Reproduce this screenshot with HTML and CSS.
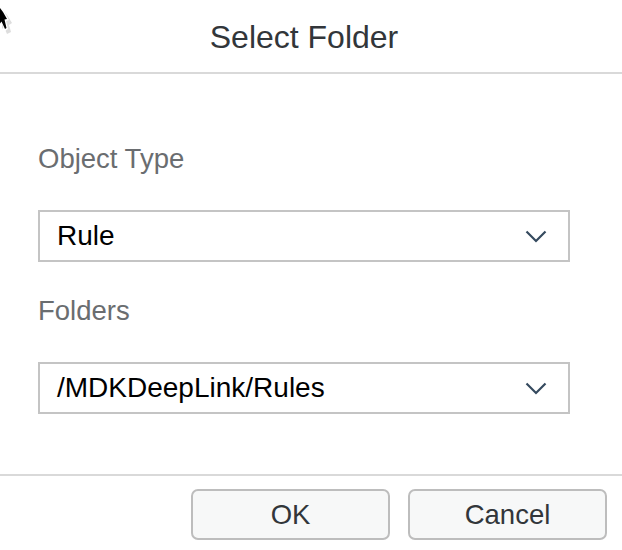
FILE: index.html
```
<!DOCTYPE html>
<html>
<head>
<meta charset="utf-8">
<link rel="stylesheet" href="styles.css">
</head>
<body>
<div class="dialog">
  <header class="header"><h1 class="title">Select Folder</h1></header>
  <main class="content">
    <label class="label">Object Type</label>
    <div class="select">
      <span class="value">Rule</span>
      <svg class="chev" width="22" height="13" viewBox="0 0 22 13"><polyline points="1.5,1.5 11,11 20.5,1.5" fill="none" stroke="#354a5f" stroke-width="2.2"/></svg>
    </div>
    <label class="label second">Folders</label>
    <div class="select">
      <span class="value">/MDKDeepLink/Rules</span>
      <svg class="chev" width="22" height="13" viewBox="0 0 22 13"><polyline points="1.5,1.5 11,11 20.5,1.5" fill="none" stroke="#354a5f" stroke-width="2.2"/></svg>
    </div>
  </main>
  <footer class="footer">
    <button class="btn">OK</button>
    <button class="btn">Cancel</button>
  </footer>
</div>
<svg class="cursor" width="16" height="36" viewBox="0 0 16 36">
  <polygon points="2,9 7,15 12,23 9,25 11,32 7,34 4,27 2,29" fill="#bbb" opacity="0.5"/>
  <polygon points="0,6 4,11 9,20 6,21 8,29 5,31 2,24 0,26" fill="#fff"/>
  <polygon points="0,8 3,12 7,19 4.5,19.5 6.5,28 5,29 1.5,21.5 0,23.5" fill="#000"/>
</svg>
</body>
</html>
```
FILE: styles.css
```
html, body {
  margin: 0;
  padding: 0;
  background: #fff;
}
body {
  width: 622px;
  height: 550px;
  overflow: hidden;
  position: relative;
  font-family: "Liberation Sans", Arial, sans-serif;
}
.dialog {
  display: flex;
  flex-direction: column;
  height: 550px;
}
.header {
  height: 72px;
  border-bottom: 2px solid #d9d9d9;
  display: flex;
  align-items: center;
  justify-content: center;
  padding-right: 14px;
}
.title {
  margin: 0;
  font-size: 32px;
  font-weight: normal;
  color: #32363a;
  line-height: 36px;
  padding-top: 2px;
}
.content {
  display: flex;
  flex-direction: column;
  padding: 69px 52px 0 38px;
}
.label {
  display: block;
  font-size: 27.5px;
  line-height: 32px;
  color: #6a6d70;
  margin-bottom: 35px;
}
.label.second {
  margin-top: 33px;
}
.select {
  height: 48px;
  border: 2px solid #c4c4c4;
  display: flex;
  align-items: center;
  justify-content: space-between;
  padding: 0 21px 0 17px;
}
.value {
  font-size: 28px;
  line-height: 48px;
  color: #000;
}
.chev {
  display: block;
  margin-top: 1px;
}
.footer {
  margin-top: 60px;
  border-top: 2px solid #d9d9d9;
  display: flex;
  justify-content: flex-end;
  gap: 18px;
  padding: 13px 15px 0 0;
}
.btn {
  width: 199px;
  height: 51px;
  border: 2px solid #bdbdbd;
  border-radius: 7px;
  background: #f7f8f8;
  font-family: "Liberation Sans", Arial, sans-serif;
  font-size: 27.5px;
  color: #32363a;
  padding: 0;
}
.cursor {
  position: absolute;
  left: 0;
  top: 0;
}
```
